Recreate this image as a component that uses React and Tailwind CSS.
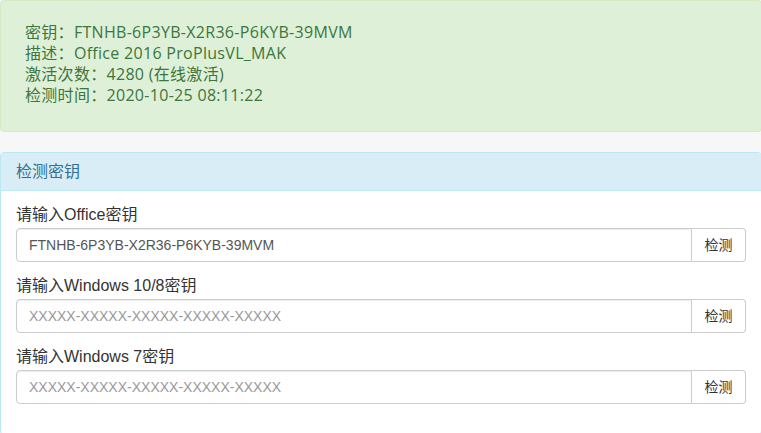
import React, { useState } from "react";

const cjk = "font-['Helvetica_Neue','Liberation_Sans','Noto_Sans_CJK_SC',sans-serif]";

function KeyField({ label, value, placeholder }) {
  const [text, setText] = useState(value || "");
  return (
    <div className="mb-[15px]">
      <label className="mb-[4px] block text-[16px] leading-[18px] text-[#333]">{label}</label>
      <div className="flex">
        <input
          type="text"
          value={text}
          placeholder={placeholder}
          onChange={(e) => setText(e.target.value)}
          className="h-[34px] min-w-0 flex-1 rounded-l-[4px] border border-[#ccc] bg-white px-[12px] text-[14px] text-[#555] shadow-[inset_0_1px_1px_rgba(0,0,0,0.075)] outline-none placeholder:text-[#999]"
        />
        <button className="h-[34px] w-[54px] rounded-r-[4px] border border-l-0 border-[#ccc] bg-white text-[14px] text-[#333]">
          检测
        </button>
      </div>
    </div>
  );
}

export default function App() {
  return (
    <div className={`min-h-[433px] w-[762px] bg-[#f7f7f7] ${cjk}`}>
      {/* 结果 */}
      <div className="mb-[20px] rounded-[4px] border border-[#d6e9c6] bg-[#dff0d8] px-[24px] pt-[21px] pb-[25px] font-['Open_Sans','Noto_Sans_CJK_SC',sans-serif] text-[16px] leading-[21px] tracking-[0.3px] text-[#3c763d]">
        <div>密钥：FTNHB-6P3YB-X2R36-P6KYB-39MVM</div>
        <div>描述：Office 2016 ProPlusVL_MAK</div>
        <div>激活次数：4280 (在线激活)</div>
        <div>检测时间：2020-10-25 08:11:22</div>
      </div>

      {/* 检测密钥 */}
      <div className="rounded-[4px] border border-[#bce8f1] bg-white">
        <div className="border-b border-[#bce8f1] bg-[#d9edf7] px-[15px] py-[9px] text-[16px] leading-[19px] text-[#31708f]">
          检测密钥
        </div>
        <div className="px-[15px] pt-[15px] pb-[15px]">
          <KeyField label="请输入Office密钥" value="FTNHB-6P3YB-X2R36-P6KYB-39MVM" />
          <KeyField label="请输入Windows 10/8密钥" placeholder="XXXXX-XXXXX-XXXXX-XXXXX-XXXXX" />
          <KeyField label="请输入Windows 7密钥" placeholder="XXXXX-XXXXX-XXXXX-XXXXX-XXXXX" />
        </div>
      </div>
    </div>
  );
}
